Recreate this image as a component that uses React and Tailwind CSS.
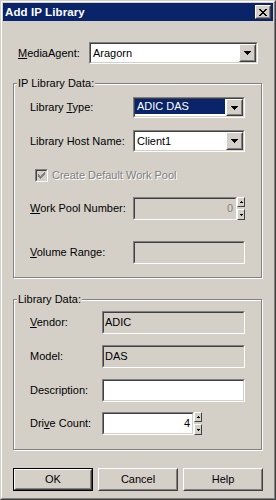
import React from "react";

function Sunken({ className = "", innerClass = "", children }) {
  return (
    <div className={"border border-t-[#808080] border-l-[#808080] border-b-white border-r-white " + className}>
      <div className={"h-full w-full border border-t-[#404040] border-l-[#404040] border-b-[#d4d0c8] border-r-[#d4d0c8] " + innerClass}>
        {children}
      </div>
    </div>
  );
}

function Raised({ className = "", innerClass = "", children }) {
  return (
    <div className={"border border-t-white border-l-white border-b-[#404040] border-r-[#404040] " + className}>
      <div className={"h-full w-full border border-t-[#d4d0c8] border-l-[#d4d0c8] border-b-[#808080] border-r-[#808080] " + innerClass}>
        {children}
      </div>
    </div>
  );
}

function DownArrow() {
  return (
    <svg width="7" height="4" viewBox="0 0 7 4" shapeRendering="crispEdges">
      <rect x="0" y="0" width="7" height="1" fill="#000" />
      <rect x="1" y="1" width="5" height="1" fill="#000" />
      <rect x="2" y="2" width="3" height="1" fill="#000" />
      <rect x="3" y="3" width="1" height="1" fill="#000" />
    </svg>
  );
}

function TinyArrow({ up }) {
  return (
    <svg width="3" height="2" viewBox="0 0 3 2" shapeRendering="crispEdges">
      {up ? (
        <>
          <rect x="1" y="0" width="1" height="1" fill="#000" />
          <rect x="0" y="1" width="3" height="1" fill="#000" />
        </>
      ) : (
        <>
          <rect x="0" y="0" width="3" height="1" fill="#000" />
          <rect x="1" y="1" width="1" height="1" fill="#000" />
        </>
      )}
    </svg>
  );
}

function Combo({ className, text, selected }) {
  return (
    <Sunken className={className} innerClass="flex bg-white">
      <div className="flex-1 min-w-0 flex">
        {selected ? (
          <div className="flex-1 mb-[2px] mr-[1px] bg-[#0a246a] text-white flex items-center pl-[2px]">{text}</div>
        ) : (
          <div className="flex-1 flex items-center pl-[2px] text-black">{text}</div>
        )}
      </div>
      <Raised className="w-[17px] h-full shrink-0" innerClass="flex items-center justify-center bg-[#d4d0c8]">
        <DownArrow />
      </Raised>
    </Sunken>
  );
}

function Spin() {
  return (
    <div className="flex flex-col justify-between w-[8px] h-full shrink-0">
      <div className="h-[10px] w-[8px] border border-t-white border-l-white border-b-[#404040] border-r-[#404040] bg-[#d4d0c8] flex items-center justify-center">
        <TinyArrow up />
      </div>
      <div className="h-[11px] w-[8px] border border-t-white border-l-white border-b-[#404040] border-r-[#404040] bg-[#d4d0c8] flex items-center justify-center">
        <TinyArrow />
      </div>
    </div>
  );
}

function Group({ title, className = "", children }) {
  return (
    <div className={"relative w-[249px] border border-[#808080] shadow-[inset_1px_1px_0_#fff,1px_1px_0_#fff] " + className}>
      <div className="absolute left-[3px] top-[-8px] bg-[#d4d0c8] px-[1px] leading-[14px] text-black">{title}</div>
      {children}
    </div>
  );
}

export default function App() {
  return (
    <div className="w-[276px] h-[500px] bg-[#d4d0c8] font-['Liberation_Sans',Arial,sans-serif] text-[11px] leading-[13px] text-black">
      <div className="h-full border border-t-[#d4d0c8] border-l-[#d4d0c8] border-b-[#404040] border-r-[#404040]">
        <div className="h-full border border-t-white border-l-white border-b-[#808080] border-r-[#808080] p-[1px] flex flex-col">
          {/* Title bar */}
          <div className="h-[18px] bg-[#0a246a] flex items-center justify-between pl-[2px] pr-[2px]">
            <span className="text-white font-bold text-[11.5px] tracking-[0.1px]">Add IP Library</span>
            <Raised className="w-[16px] h-[14px]" innerClass="bg-[#d4d0c8] flex items-center justify-center">
              <svg width="8" height="7" viewBox="0 0 8 7" shapeRendering="crispEdges">
                <path d="M0 0h2v1h-2zM6 0h2v1h-2zM1 1h2v1h-2zM5 1h2v1h-2zM2 2h4v1h-4zM3 3h2v1h-2zM2 4h4v1h-4zM1 5h2v1h-2zM5 5h2v1h-2zM0 6h2v1h-2zM6 6h2v1h-2z" fill="#000" />
              </svg>
            </Raised>
          </div>

          {/* Content */}
          <div className="px-[10px] flex flex-col">
            {/* MediaAgent */}
            <div className="mt-[21px] flex items-center pl-[5px]">
              <div className="w-[71px]"><u>M</u>ediaAgent:</div>
              <Combo className="w-[169px] h-[22px]" text="Aragorn" />
            </div>

            {/* IP Library Data */}
            <Group title="IP Library Data:" className="mt-[19px]">
              <div className="flex flex-col pl-[16px] pt-[13px] pb-[13px]">
                <div className="flex items-center">
                  <div className="w-[103px]">Library <u>T</u>ype:</div>
                  <Combo className="w-[112px] h-[21px]" text="ADIC DAS" selected />
                </div>
                <div className="flex items-center mt-[12px]">
                  <div className="w-[103px]">Library Host Name:</div>
                  <Combo className="w-[112px] h-[22px]" text="Client1" />
                </div>
                <div className="flex items-center mt-[17px] pl-[5px]">
                  <Sunken className="w-[13px] h-[13px]" innerClass="bg-[#d4d0c8] flex items-center justify-center">
                    <svg width="7" height="7" viewBox="0 0 7 7" shapeRendering="crispEdges">
                      <path d="M6 0h1v3h-1zM5 1h1v3h-1zM4 2h1v3h-1zM3 3h1v3h-1zM2 4h1v3h-1zM1 3h1v3h-1zM0 2h1v3h-1z" fill="#808080" />
                    </svg>
                  </Sunken>
                  <span className="ml-[4px] text-[#808080] [text-shadow:1px_1px_0_#fff]">Create Default Work Pool</span>
                </div>
                <div className="flex items-center mt-[15px]">
                  <div className="w-[103px]"><u>W</u>ork Pool Number:</div>
                  <div className="flex h-[23px] w-[112px]">
                    <Sunken className="w-[104px] h-full" innerClass="bg-[#d4d0c8] flex items-center justify-end pr-[2px] text-[#808080]">0</Sunken>
                    <Spin />
                  </div>
                </div>
                <div className="flex items-center mt-[21px]">
                  <div className="w-[103px]"><u>V</u>olume Range:</div>
                  <Sunken className="w-[112px] h-[23px]" innerClass="bg-[#d4d0c8]" />
                </div>
              </div>
            </Group>

            {/* Library Data */}
            <Group title="Library Data:" className="mt-[21px]">
              <div className="flex flex-col pl-[16px] pt-[11px] pb-[14px]">
                <div className="flex items-center">
                  <div className="w-[72px]"><u>V</u>endor:</div>
                  <Sunken className="w-[143px] h-[23px]" innerClass="bg-[#d4d0c8] flex items-center pl-[1px]">ADIC</Sunken>
                </div>
                <div className="flex items-center mt-[11px]">
                  <div className="w-[72px]">Model:</div>
                  <Sunken className="w-[143px] h-[23px]" innerClass="bg-[#d4d0c8] flex items-center pl-[1px]">DAS</Sunken>
                </div>
                <div className="flex items-center mt-[11px]">
                  <div className="w-[72px]">Description:</div>
                  <Sunken className="w-[143px] h-[23px]" innerClass="bg-white" />
                </div>
                <div className="flex items-center mt-[10px]">
                  <div className="w-[72px]">Dri<u>v</u>e Count:</div>
                  <div className="flex h-[23px]">
                    <Sunken className="w-[92px] h-full" innerClass="bg-white flex items-center justify-end pr-[2px]">4</Sunken>
                    <Spin />
                  </div>
                </div>
              </div>
            </Group>

            {/* Buttons */}
            <div className="mt-[18px] flex gap-[5px]">
              <div className="w-[80px] h-[23px] border border-black">
                <Raised className="w-full h-full" innerClass="bg-[#d4d0c8] flex items-center justify-center">OK</Raised>
              </div>
              <Raised className="w-[80px] h-[23px]" innerClass="bg-[#d4d0c8] flex items-center justify-center">Cancel</Raised>
              <Raised className="w-[80px] h-[23px]" innerClass="bg-[#d4d0c8] flex items-center justify-center">Help</Raised>
            </div>
          </div>
        </div>
      </div>
    </div>
  );
}
